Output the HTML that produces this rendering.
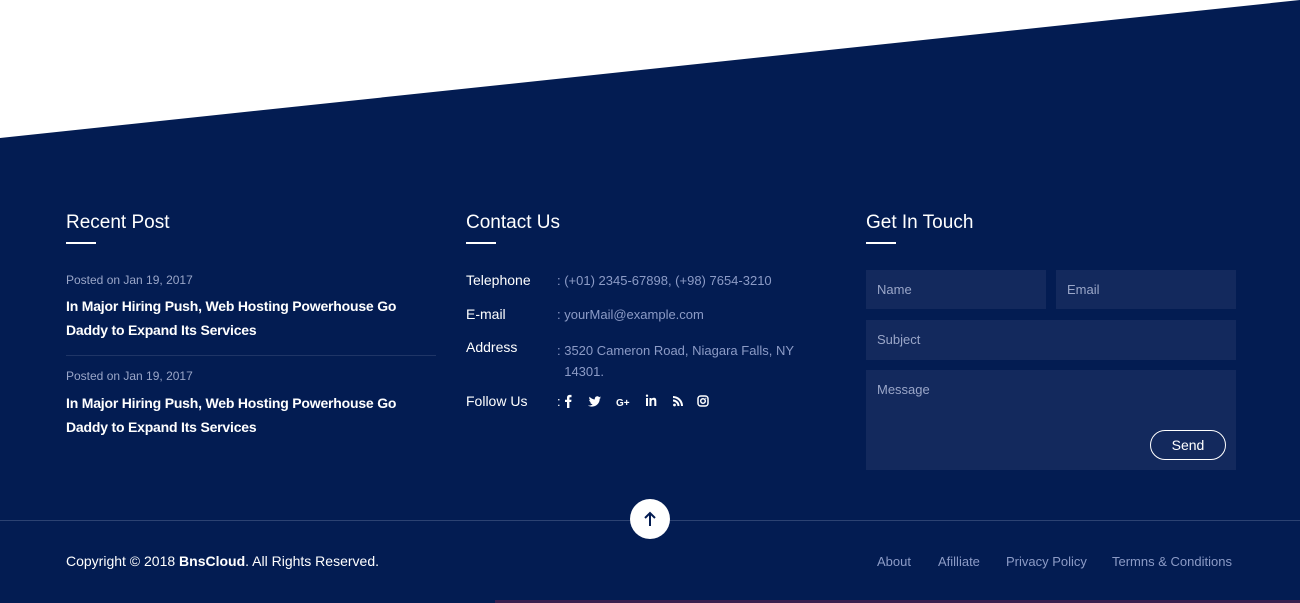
<!DOCTYPE html>
<html><head><style>
*{margin:0;padding:0;box-sizing:border-box}
body{width:1300px;height:603px;overflow:hidden;background:#fff;font-family:"Liberation Sans",sans-serif;position:relative}
.bg{position:absolute;left:0;top:0;width:1300px;height:603px}
.t{position:absolute;white-space:nowrap}
h3{position:absolute;color:#fff;font-weight:normal;font-size:19px;top:212px}
.ul{position:absolute;top:242px;width:30px;height:2px;background:#fff}
.meta{color:#9aa6c8;font-size:12px}
.post{color:#fff;font-size:14px;font-weight:bold;line-height:24px;letter-spacing:-0.2px}
.lab{color:#fff;font-size:14px}
.val{color:#8c9bc6;font-size:13px}
.in{position:absolute;background:#13295d;color:#9aa6c8;font-size:13px;padding:12px 11px}
.fl{color:#8c9bc6;font-size:13px}
</style></head><body>
<svg class="bg" viewBox="0 0 1300 603"><polygon points="0,138 1300,0 1300,603 0,603" fill="#031c52"/><rect x="0" y="520" width="1300" height="1" fill="#2c4272"/><rect x="495" y="600" width="805" height="3" fill="#3a1f4e"/><circle cx="650" cy="519" r="20" fill="#fff"/><path d="M650 526V513M645 518l5-5 5 5" stroke="#031c52" stroke-width="2" fill="none"/>
<g fill="#fff">
<path d="M567 408v-6h-2v-2.3h2v-1.8c0-2 1-3 2.8-3h1.7v2.3h-1.2c-.7 0-.9.3-.9 1v1.5h2.1l-.3 2.3h-1.8v6z"/>
<path d="M588 405.5c2 .2 3.5-.3 4.6-1.3-1.3 0-2.2-.8-2.5-1.8.4.1.8.1 1.2 0-1.3-.3-2.1-1.3-2.1-2.6.4.2.8.3 1.2.3-1.2-.8-1.5-2.3-.8-3.4 1.4 1.6 3.2 2.6 5.3 2.7-.4-1.6.8-3.1 2.4-3.1.7 0 1.4.3 1.8.8.6-.1 1.1-.3 1.6-.6-.2.6-.6 1.1-1.1 1.4.5 0 1-.2 1.4-.4-.3.5-.8 1-1.3 1.3.1 4.5-3.6 8.1-8.2 7.8-1.3-.1-2.5-.4-3.5-1.1z"/>
<text x="616" y="406" font-size="10" font-weight="bold" font-family="Liberation Sans">G+</text>
<path d="M646 398h2v8h-2zM647 394.5a1.2 1.2 0 1 1 0 2.4 1.2 1.2 0 0 1 0-2.4zM649.5 398h2v1.1c.4-.8 1.3-1.3 2.3-1.3 2 0 2.5 1.3 2.5 3.2v5h-2v-4.5c0-1-.2-1.8-1.2-1.8s-1.6.7-1.6 1.8v4.5h-2z"/>
<circle cx="674.5" cy="405" r="1.4"/>
<path d="M673 399.5a6.5 6.5 0 0 1 6.5 6.5h-2a4.5 4.5 0 0 0-4.5-4.5zM673 396a10 10 0 0 1 10 10h-2a8 8 0 0 0-8-8z"/>
</g>
<rect x="698" y="396" width="10" height="10" rx="2.8" fill="none" stroke="#fff" stroke-width="1.5"/><circle cx="703" cy="401" r="2.3" fill="none" stroke="#fff" stroke-width="1.5"/><circle cx="705.8" cy="398.3" r=".6" fill="#fff"/>
</svg>

<h3 style="left:66px">Recent Post</h3><div class="ul" style="left:66px"></div>
<h3 style="left:466px">Contact Us</h3><div class="ul" style="left:466px"></div>
<h3 style="left:866px">Get In Touch</h3><div class="ul" style="left:866px"></div>

<div class="t meta" style="left:66px;top:273px">Posted on Jan 19, 2017</div>
<div class="t post" style="left:66px;top:294px">In Major Hiring Push, Web Hosting Powerhouse Go<br>Daddy to Expand Its Services</div>
<div style="position:absolute;left:66px;top:355px;width:370px;height:1px;background:#1f3566"></div>
<div class="t meta" style="left:66px;top:369px">Posted on Jan 19, 2017</div>
<div class="t post" style="left:66px;top:391px">In Major Hiring Push, Web Hosting Powerhouse Go<br>Daddy to Expand Its Services</div>

<div class="t lab" style="left:466px;top:272px">Telephone</div><div class="t val" style="left:557px;top:273px">: (+01) 2345-67898, (+98) 7654-3210</div>
<div class="t lab" style="left:466px;top:306px">E-mail</div><div class="t val" style="left:557px;top:307px">: yourMail@example.com</div>
<div class="t lab" style="left:466px;top:339px">Address</div><div class="t val" style="left:557px;top:340px;line-height:21px">: 3520 Cameron Road, Niagara Falls, NY<br>&nbsp;&nbsp;14301.</div>
<div class="t lab" style="left:466px;top:393px">Follow Us</div>
<div class="t val" style="left:557px;top:394px;color:#fff">:</div>

<div class="in" style="left:866px;top:270px;width:180px;height:39px">Name</div>
<div class="in" style="left:1056px;top:270px;width:180px;height:39px">Email</div>
<div class="in" style="left:866px;top:320px;width:370px;height:40px">Subject</div>
<div class="in" style="left:866px;top:370px;width:370px;height:100px">Message</div>
<div style="position:absolute;left:1150px;top:430px;width:76px;height:30px;border:1px solid #fff;border-radius:15px;color:#fff;font-size:14px;text-align:center;line-height:28px">Send</div>

<div class="t" style="left:66px;top:553px;color:#fff;font-size:14px">Copyright © 2018 <b>BnsCloud</b>. All Rights Reserved.</div>
<div class="t fl" style="left:877px;top:554px">About</div>
<div class="t fl" style="left:938px;top:554px">Afilliate</div>
<div class="t fl" style="left:1006px;top:554px">Privacy Policy</div>
<div class="t fl" style="left:1112px;top:554px">Termns &amp; Conditions</div>
</body></html>
